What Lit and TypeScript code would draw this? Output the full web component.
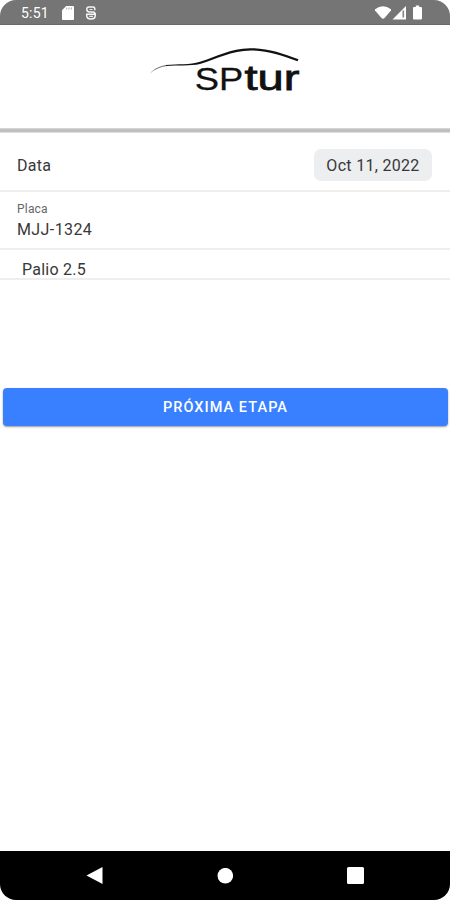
import { LitElement, html, css } from "lit";
import { customElement } from "lit/decorators.js";

@customElement("app-root")
export class AppRoot extends LitElement {
  static styles = css`
    :host {
      display: block;
      width: 450px;
      height: 900px;
      background: #fff;
      font-family: Roboto, sans-serif;
      color: #383838;
    }
    * { box-sizing: border-box; }
    svg { display: block; }
    .screen {
      height: 900px;
      display: flex;
      flex-direction: column;
      border-radius: 16px;
      overflow: hidden;
      background: #fff;
    }
    .status {
      height: 25px;
      flex: none;
      display: flex;
      align-items: center;
      background: #757575;
      border-bottom: 1px solid #696969;
      color: #fff;
      font-size: 14px;
      padding: 2px 26px 0 21px;
    }
    .time { width: 41px; letter-spacing: 0.2px; }
    .sys { display: flex; }
    .left { gap: 11px; }
    .right { margin-left: auto; }
    .header {
      height: 108px;
      flex: none;
      padding: 15px 0 0 140px;
      background: linear-gradient(#fff 0 103px, #dedede 103px, #b9b9b9 105px, #c6c6c6 107px, #f1f1f1 108px);
    }
    .logo { font-family: "Liberation Sans", Arial, sans-serif; }
    .row {
      flex: none;
      border-bottom: 2px solid #eee;
      font-size: 16px;
      letter-spacing: 0.3px;
      padding: 0 18px 0 17px;
    }
    .date {
      height: 59px;
      display: flex;
      align-items: center;
      justify-content: space-between;
      padding-top: 8px;
    }
    .chip {
      width: 118px;
      height: 32px;
      line-height: 32px;
      padding-top: 1px;
      margin-bottom: 1px;
      text-align: center;
      border-radius: 7px;
      background: #edeef0;
    }
    .plate { height: 58px; padding-top: 10px; }
    .label { font-size: 12px; line-height: 15px; color: #666; letter-spacing: 0.2px; }
    .value { line-height: 20px; margin-top: 3px; letter-spacing: 0.4px; }
    .model { height: 30px; line-height: 20px; padding: 10px 0 0 22px; letter-spacing: 0.25px; }
    .next {
      flex: none;
      margin: 108px 2px 0 3px;
      height: 38px;
      border: 0;
      border-radius: 4px;
      background: #3880ff;
      color: #fff;
      font: 500 14.500px Roboto, sans-serif;
      letter-spacing: 1.05px;
      text-transform: uppercase;
      box-shadow: 0 1px 2px rgba(0, 0, 0, 0.4);
    }
    .nav {
      margin-top: auto;
      height: 49px;
      flex: none;
      background: #000;
      display: flex;
      justify-content: center;
      align-items: center;
      gap: 106px;
    }
  `;

  render() {
    return html`
      <div class="screen">
        <div class="status">
          <span class="time">5:51</span>
          <div class="sys left">
            <svg width="12" height="14" viewBox="0 0 12 14">
              <path d="M4.2 0H11q1 0 1 1v12q0 1-1 1H1q-1 0-1-1V4.2z" fill="#fff" />
              <path d="M4.7 1.5v2M7 1.5v2M9.3 1.5v2" stroke="#aaa" />
            </svg>
            <svg width="12" height="14" viewBox="0 0 12 14">
              <path d="M9.800 4.200V2.600Q9.800 1 8 1H4Q1.800 1 1.800 3.300 1.800 5.700 4 6H8.500Q10.300 6.300 10.300 9.200 10.300 13 6 13 1.700 13 1.700 9.500V8.200H10" fill="none" stroke="#f5f5f5" stroke-width="1.500" />
              <path d="M4.500 3.500h3M4.200 10.300h3.800" stroke="#e8e8e8" stroke-width="1.200" />
            </svg>
          </div>
          <svg class="right" width="49" height="16" viewBox="375 5 49 16">
            <path d="M375 9.200Q383 3.400 391 9.200V10.500L384.500 18q-1.500 1.600-3 0L375 10.500z" fill="#fff" />
            <path d="M406 6V19.500H392.500z" fill="#fff" />
            <path d="M403.300 10.500V17.500" stroke="#858585" stroke-width="1.600" />
            <path d="M415.800 5.500h3.400V7h1.800q1 0 1 1V18.500q0 1-1 1h-7q-1 0-1-1V8q0-1 1-1h1.800z" fill="#fff" />
          </svg>
        </div>
        <div class="header">
          <svg class="logo" width="170" height="64" viewBox="140 40 170 64">
            <path d="M150 73.500C154 68.500 160 65.700 167 65L167 66C160 67 154 69.500 150 73.500Z" fill="#777" />
            <path d="M166 65C178 64 190 65 200 61.800 217 56.500 230 48.400 250 48.200 267 48 282 53 298.500 59.300L297.500 61.300C281 55.500 267 50.500 251 50.500 231 50.500 217 59 200 64 190 66.200 178 65 166 66.100Z" fill="#111" />
            <text x="194.800" y="89.500" font-size="32" textLength="48.500" lengthAdjust="spacingAndGlyphs" fill="#111" stroke="#111" stroke-width=".3">SP</text>
            <text x="244.500" y="89.500" font-size="35" textLength="55" lengthAdjust="spacingAndGlyphs" fill="#111" stroke="#111" stroke-width=".8">tur</text>
          </svg>
        </div>
        <div class="row date"><span>Data</span><span class="chip">Oct 11, 2022</span></div>
        <div class="row plate">
          <div class="label">Placa</div>
          <div class="value">MJJ-1324</div>
        </div>
        <div class="row model">Palio 2.5</div>
        <button class="next">Próxima etapa</button>
        <div class="nav">
          <svg width="32" height="20" viewBox="0 0 32 20"><path d="M7.500 9.500 23.500 1v17z" fill="#fff" /></svg>
          <svg width="16" height="16" viewBox="0 0 16 16"><circle cx="8.300" cy="7.700" r="7.800" fill="#fff" /></svg>
          <svg width="32" height="20" viewBox="0 0 32 20"><rect x="8" y="1" width="17" height="17" rx="1.500" fill="#fff" /></svg>
        </div>
      </div>
    `;
  }
}
